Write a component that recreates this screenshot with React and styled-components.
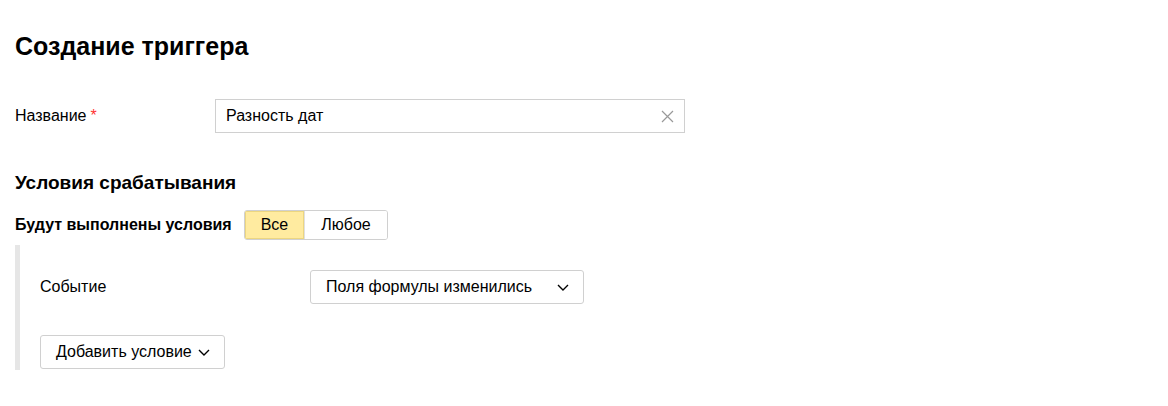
import React, { useState } from 'react'
import styled, { createGlobalStyle } from 'styled-components'

const GlobalStyle = createGlobalStyle`
  * { box-sizing: border-box; }
  body {
    margin: 0;
    background: #fff;
    font-family: "Liberation Sans", Arial, sans-serif;
    color: #000;
  }
`

const Page = styled.div`
  padding: 31px 15px 20px;
`

const Title = styled.h1`
  margin: 0;
  font-size: 25px;
  line-height: 30px;
  font-weight: bold;
`

const FieldRow = styled.div`
  display: flex;
  align-items: center;
  margin-top: ${(p) => p.$top || 0}px;
`

const Label = styled.div`
  width: ${(p) => p.$width}px;
  flex-shrink: 0;
  font-size: 16px;
`

const Required = styled.span`
  color: #f33;
  margin-left: 4px;
`

const InputWrap = styled.div`
  position: relative;
  width: 470px;
  height: 34px;
  border: 1px solid #d0d0d0;
  display: flex;
  align-items: center;
`

const TextInput = styled.input`
  border: 0;
  outline: none;
  width: 100%;
  height: 100%;
  padding: 0 32px 0 10px;
  font-family: inherit;
  font-size: 16px;
  color: #000;
  background: transparent;
`

const ClearButton = styled.button`
  position: absolute;
  right: 10px;
  top: 10px;
  width: 13px;
  height: 13px;
  padding: 0;
  border: 0;
  background: none;
  cursor: pointer;
  display: flex;
`

const SectionTitle = styled.h2`
  margin: 38px 0 0;
  font-size: 19px;
  line-height: 24px;
  font-weight: bold;
`

const ModeRow = styled.div`
  display: flex;
  align-items: center;
  margin-top: 15px;
`

const ModeLabel = styled.div`
  font-size: 16px;
  font-weight: bold;
  margin-right: 12px;
`

const Segmented = styled.div`
  display: flex;
  height: 30px;
  border: 1px solid #d0d0d0;
  border-radius: 3px;
  overflow: hidden;
`

const Segment = styled.button`
  border: 0;
  margin: 0;
  padding: 0 ${(p) => p.$pad}px;
  font-family: inherit;
  font-size: 16px;
  color: #000;
  cursor: pointer;
  background: ${(p) => (p.$active ? '#ffeba0' : '#fff')};
  box-shadow: ${(p) => (p.$active ? 'inset 0 0 0 1px #ecd680' : 'none')};
  & + & {
    border-left: 1px solid ${(p) => (p.$active ? '#ecd680' : '#e0e0e0')};
  }
`

const ConditionBlock = styled.div`
  margin-top: 5px;
  border-left: 5px solid #e6e6e6;
  padding: 25px 0 1px 20px;
`

const Select = styled.button`
  width: 274px;
  height: 34px;
  display: flex;
  align-items: center;
  justify-content: space-between;
  padding: 0 14px 0 15px;
  border: 1px solid #d0d0d0;
  border-radius: 3px;
  background: #fff;
  font-family: inherit;
  font-size: 16px;
  color: #000;
  cursor: pointer;
`

const AddButton = styled(Select)`
  width: auto;
  gap: 6px;
  margin-top: 31px;
`

const Chevron = () => (
  <svg width="12" height="7" viewBox="0 0 12 7" fill="none">
    <path d="M1 1l5 5 5-5" stroke="#000" strokeWidth="1.4" />
  </svg>
)

const CrossIcon = () => (
  <svg width="13" height="13" viewBox="0 0 13 13" fill="none">
    <path d="M1 1l11 11M12 1L1 12" stroke="#999" strokeWidth="1.2" />
  </svg>
)

const App = () => {
  const [name, setName] = useState('Разность дат')
  const [mode, setMode] = useState('all')

  return (
    <>
      <GlobalStyle />
      <Page>
        <Title>Создание триггера</Title>

        <FieldRow $top={38}>
          <Label $width={200}>
            Название<Required>*</Required>
          </Label>
          <InputWrap>
            <TextInput value={name} onChange={(e) => setName(e.target.value)} />
            <ClearButton onClick={() => setName('')}>
              <CrossIcon />
            </ClearButton>
          </InputWrap>
        </FieldRow>

        <SectionTitle>Условия срабатывания</SectionTitle>

        <ModeRow>
          <ModeLabel>Будут выполнены условия</ModeLabel>
          <Segmented>
            <Segment $pad={16} $active={mode === 'all'} onClick={() => setMode('all')}>
              Все
            </Segment>
            <Segment $pad={16} $active={mode === 'any'} onClick={() => setMode('any')}>
              Любое
            </Segment>
          </Segmented>
        </ModeRow>

        <ConditionBlock>
          <FieldRow>
            <Label $width={270}>Событие</Label>
            <Select>
              Поля формулы изменились
              <Chevron />
            </Select>
          </FieldRow>
          <AddButton>
            Добавить условие
            <Chevron />
          </AddButton>
        </ConditionBlock>
      </Page>
    </>
  )
}

export default App
